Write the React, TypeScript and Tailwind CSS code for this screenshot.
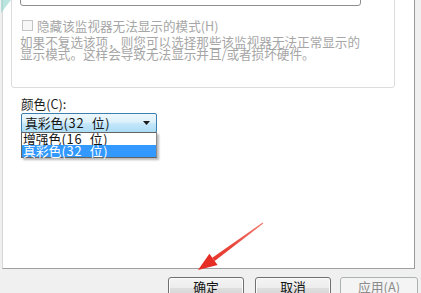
import React from "react";

const font = '"Noto Sans CJK SC", "Noto Sans", sans-serif';

export default function App() {
  return (
    <div
      className="relative w-[421px] h-[293px] overflow-hidden bg-[#f0f0f0] flex flex-col"
      style={{ fontFamily: font }}
    >
      {/* Tab panel */}
      <div className="relative ml-[2px] w-[413px] h-[269px] shrink-0 bg-white border-l border-r border-b border-l-[#d6d6d6] border-r-[#9a9a9a] border-b-[#a0a0a0] flex flex-col">
        {/* Group box */}
        <div className="ml-[8px] -mt-[40px] w-[384px] h-[128px] shrink-0 border border-[#dcdcdc] rounded-[3px] flex flex-col">
          <div className="ml-[8px] mt-[15px] w-[341px] h-[30px] shrink-0 border border-[#8e8e8e] rounded-[3px]" />
          <div className="ml-[10px] mt-[13px] h-[13px] flex items-center">
            <div className="w-[11px] h-[11px] border border-[#c4c4c4] bg-[#f7f7f7]" />
            <span className="ml-[4px] text-[12.6px] leading-[13px] text-[#a6a6a6] whitespace-nowrap">
              隐藏该监视器无法显示的模式(H)
            </span>
          </div>
          <p className="ml-[8px] mt-[4px] text-[12.6px] leading-[12px] text-[#a6a6a6] whitespace-nowrap">
            如果不复选该项，则您可以选择那些该监视器无法正常显示的
            <br />
            显示模式。这样会导致无法显示并且/或者损坏硬件。
          </p>
        </div>

        <div className="ml-[18px] mt-[9px] text-[12.6px] leading-[14px] text-[#1e1e1e]">颜色(C):</div>

        {/* Combobox */}
        <div className="relative ml-[18px] mt-[2px] w-[136px] h-[20px] shrink-0 border border-[#3c7fb1] rounded-[2px] bg-[linear-gradient(#eef8fd,#dcf1fc_45%,#c3e6fa_55%,#acdcf6)] flex items-center">
          <span className="ml-[3px] text-[12.8px] leading-[14px] text-[#141414] whitespace-nowrap">
            真彩色<span className="tracking-[0.8px]">(32&nbsp; 位)</span>
          </span>
          <svg className="absolute right-[6px] top-[7px]" width="7" height="4" viewBox="0 0 7 4">
            <polygon points="0,0 7,0 3.5,4" fill="#1a1a1a" />
          </svg>
          {/* Drop-down list */}
          <div className="absolute left-[-1px] top-[18px] w-[136px] border border-[#646464] border-r-[#8a8a8a] bg-white shadow-[2px_2px_2px_rgba(0,0,0,0.28)] flex flex-col z-10">
            <div className="h-[12px] pl-[1px] flex items-center text-[12.8px] leading-[12px] text-[#141414] whitespace-nowrap">
              增强色<span className="tracking-[0.8px]">(16&nbsp; 位)</span>
            </div>
            <div className="h-[12px] pl-[1px] flex items-center bg-[#3399ff] text-[12.8px] leading-[12px] text-white whitespace-nowrap">
              真彩色<span className="tracking-[0.8px]">(32&nbsp; 位)</span>
            </div>
          </div>
        </div>

        {/* Teal corner */}
        <svg className="absolute left-[-2px] top-0" width="12" height="14" viewBox="0 0 12 14">
          <polygon points="0,0 10,0 0,13" fill="#8fd3ca" opacity="0.6" />
        </svg>
      </div>

      {/* Buttons */}
      <div className="flex mt-[8px] ml-[168px] text-[12.8px] leading-[13px]">
        <div className="w-[76px] h-[23px] shrink-0 border border-[#707070] rounded-[3px] bg-[linear-gradient(#f4f4f4,#ececec_50%,#dedede_50%,#d2d2d2)] shadow-[inset_0_0_0_1px_#fbfbfb] flex justify-center pt-[2px] text-[#141414]">
          确定
        </div>
        <div className="ml-[11px] w-[76px] h-[23px] shrink-0 border border-[#707070] rounded-[3px] bg-[linear-gradient(#f4f4f4,#ececec_50%,#dedede_50%,#d2d2d2)] shadow-[inset_0_0_0_1px_#fbfbfb] flex justify-center pt-[2px] text-[#141414]">
          取消
        </div>
        <div className="ml-[9px] w-[78px] h-[23px] shrink-0 border border-[#adb2b5] rounded-[3px] bg-[#f4f4f4] flex justify-center pt-[2px] text-[#8c8c8c]">
          应用(A)
        </div>
      </div>

      {/* Red arrow annotation */}
      <svg className="absolute left-0 top-0 pointer-events-none" width="421" height="293" viewBox="0 0 421 293">
        <defs>
          <linearGradient id="ar" x1="263" y1="223" x2="199" y2="270" gradientUnits="userSpaceOnUse">
            <stop offset="0" stopColor="#f07a6e" />
            <stop offset="0.5" stopColor="#e8463a" />
            <stop offset="1" stopColor="#e52d24" />
          </linearGradient>
        </defs>
        <polygon points="263.3,223.4 262.7,222.6 212.3,257.7 214.7,260.9" fill="url(#ar)" />
        <polygon points="198,270 217.6,264.9 209.4,253.7" fill="#e52d24" />
      </svg>
    </div>
  );
}
